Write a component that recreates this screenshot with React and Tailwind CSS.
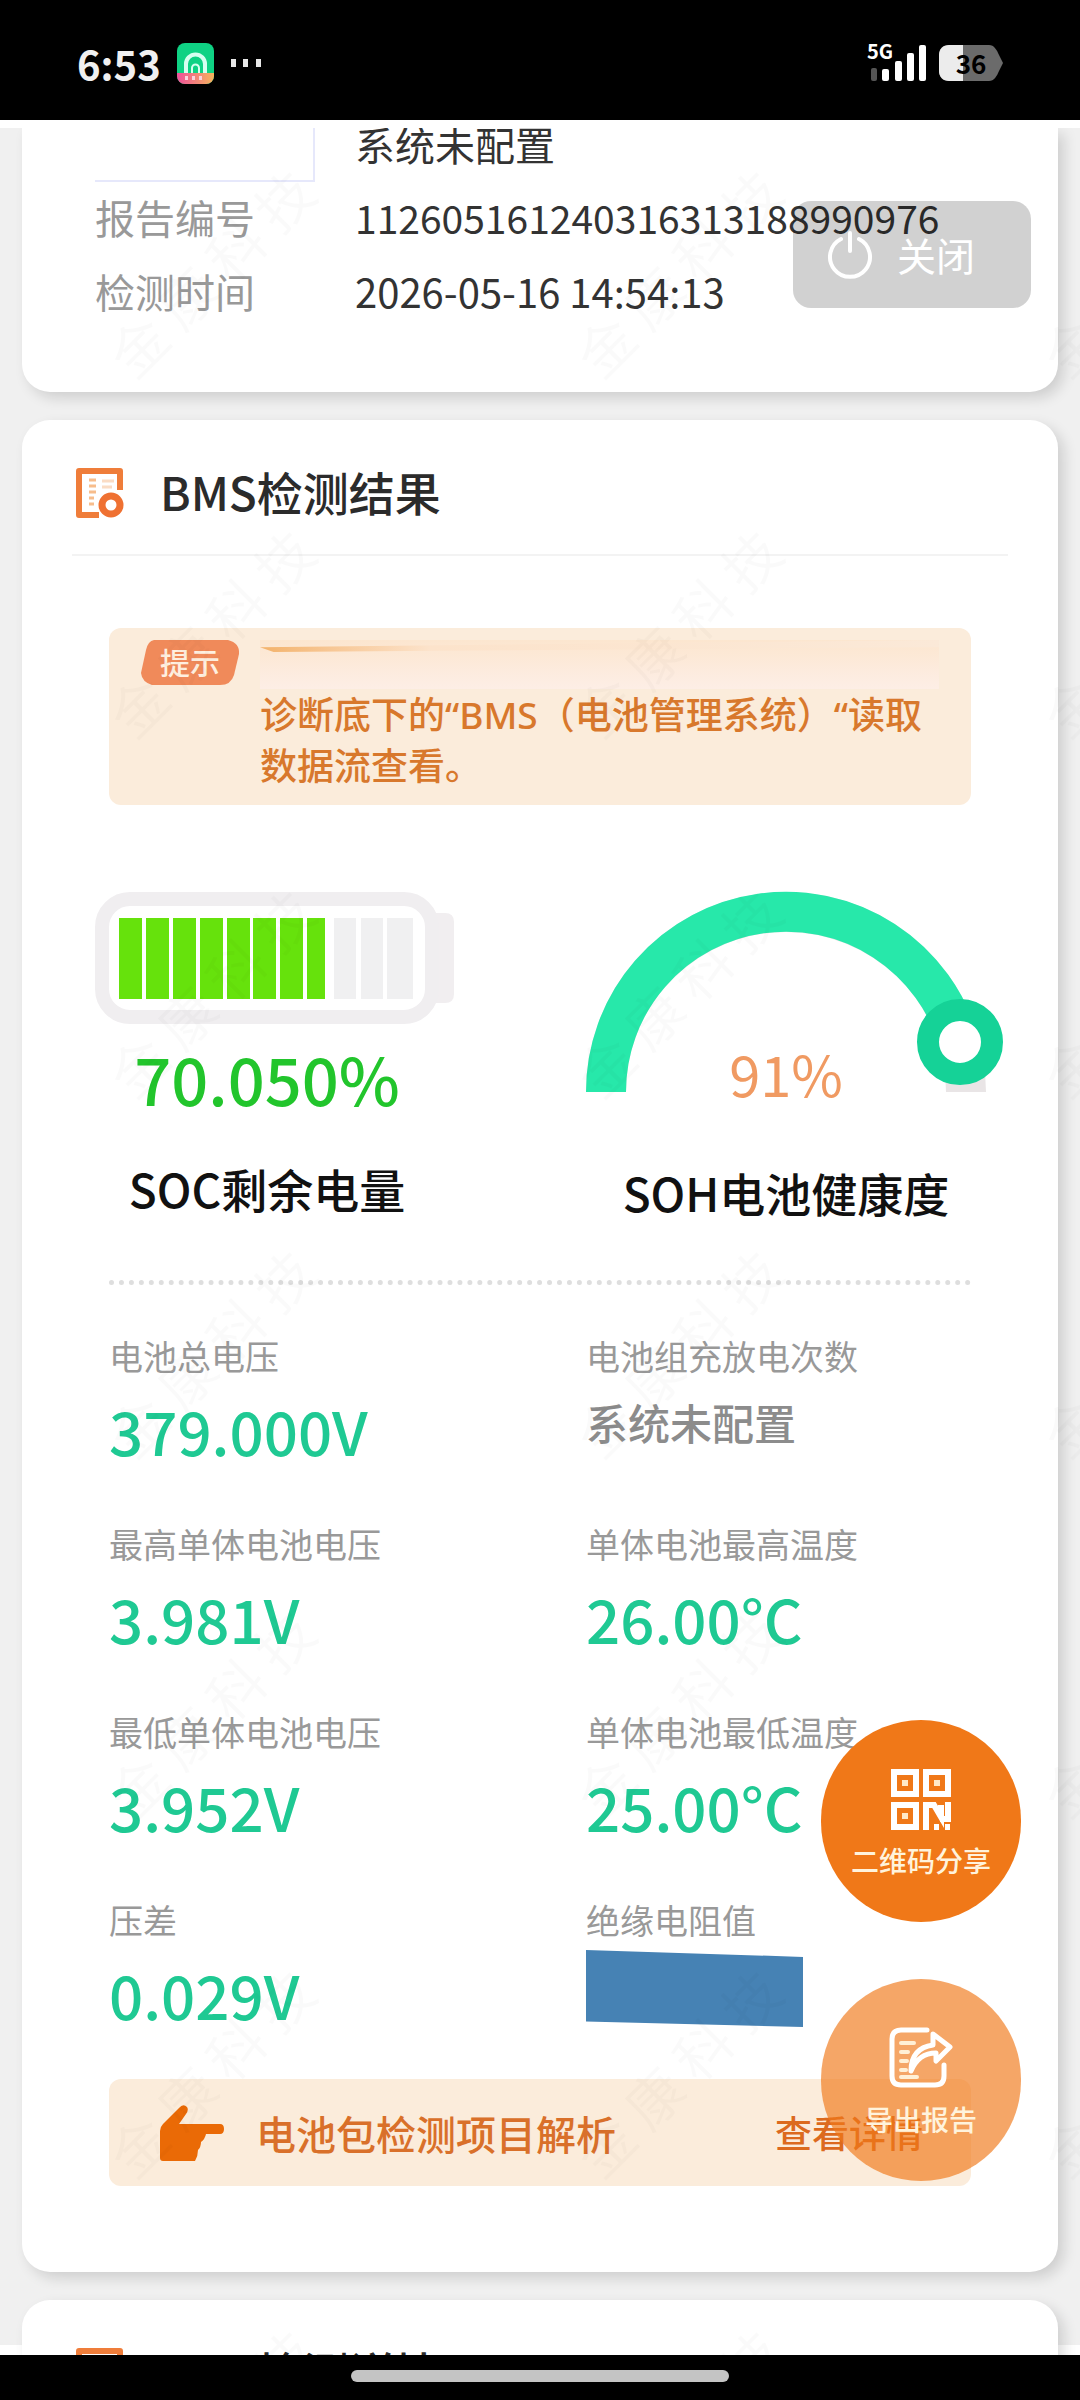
import React from "react";

const metrics = [
  { label: "电池总电压", value: "379.000V" },
  { label: "电池组充放电次数", value: null },
  { label: "最高单体电池电压", value: "3.981V" },
  { label: "单体电池最高温度", value: "26.00°C" },
  { label: "最低单体电池电压", value: "3.952V" },
  { label: "单体电池最低温度", value: "25.00°C" },
  { label: "压差", value: "0.029V" },
  { label: "绝缘电阻值", masked: true },
];

// widths of the battery cells, the eighth one is only partly filled
const cells = [
  { x: 24, w: 23, on: true },
  { x: 51, w: 23, on: true },
  { x: 78, w: 23, on: true },
  { x: 105, w: 23, on: true },
  { x: 132, w: 23, on: true },
  { x: 158, w: 23, on: true },
  { x: 185, w: 23, on: true },
  { x: 212, w: 18, on: true },
  { x: 239, w: 22, on: false },
  { x: 266, w: 22, on: false },
  { x: 292, w: 26, on: false },
];

function StatusBar() {
  return (
    <header className="flex h-[120px] shrink-0 items-center justify-between bg-black pl-[77px] pr-[77px] pt-1.5 text-white">
      <div className="flex items-center">
        <span className="text-[40px] font-bold leading-[48px] text-[#f0f0f0]">6:53</span>
        <svg className="ml-4 h-[41px] w-[37px]" viewBox="0 0 37 41">
          <defs>
            <linearGradient id="appStrip" x1="0" x2="1">
              <stop offset="0" stopColor="#f0509a" />
              <stop offset="1" stopColor="#f5b45c" />
            </linearGradient>
            <clipPath id="appClip">
              <rect width="37" height="41" rx="8" />
            </clipPath>
          </defs>
          <g clipPath="url(#appClip)">
            <rect width="37" height="41" fill="#0fd284" />
            <path d="M9 31V21a9.500 9.500 0 0 1 19 0v10" fill="none" stroke="#d6fff0" strokeWidth="4" />
            <path d="M15 31v-6a3.500 3.500 0 0 1 7 0v6" fill="none" stroke="#d6fff0" strokeWidth="2" />
            <rect y="30" width="37" height="11" fill="url(#appStrip)" />
            <path d="M8 33h3v4H8zM15 33h3v4h-3zM22 33h3v4h-3z" fill="#fbd3df" />
          </g>
        </svg>
        <svg className="ml-4 h-2 w-8" viewBox="0 0 32 8" fill="#e8e8e8">
          <rect x="1" y="0" width="5" height="8" />
          <rect x="13" y="0" width="5" height="8" />
          <rect x="26" y="0" width="5" height="8" />
        </svg>
      </div>
      <div className="flex items-center gap-3">
        <div className="relative h-11 w-[60px]">
          <span className="absolute left-0 top-0 text-[20px] font-bold leading-5">5G</span>
          <svg className="h-11 w-[60px]" viewBox="0 0 60 44" fill="#fff">
            <rect x="4" y="27" width="6" height="13" rx="2" fill="#555" />
            <rect x="15" y="28" width="7" height="12" rx="2" />
            <rect x="28" y="20" width="7" height="20" rx="2" />
            <rect x="40" y="12" width="7" height="28" rx="2" />
            <rect x="52" y="4" width="7" height="36" rx="2" />
          </svg>
        </div>
        <div className="relative h-9 w-16">
          <svg className="h-9 w-16" viewBox="0 0 64 36">
            <path d="M10 0h40c5 0 8 5 10 10l4 8-4 8c-2 5-5 10-10 10H10C4 36 0 32 0 26V10C0 4 4 0 10 0z" fill="#6b6b6b" />
            <path d="M24 0H10C4 0 0 4 0 10v16c0 6 4 10 10 10h14z" fill="#ececec" />
          </svg>
          <span className="absolute inset-0 text-center text-[26px] font-bold leading-9 text-black">36</span>
        </div>
      </div>
    </header>
  );
}

function Watermark() {
  return (
    <div
      aria-hidden="true"
      className="pointer-events-none absolute -left-6 -top-9 z-10 grid select-none auto-rows-[360px] grid-cols-[repeat(3,467px)] text-[56px] leading-none text-black/2"
    >
      {Array.from({ length: 21 }, (_, i) => (
        <div key={i} className="flex items-center justify-center">
          <span className="-rotate-45 whitespace-nowrap">金 康 科 技</span>
        </div>
      ))}
    </div>
  );
}

function ReportIcon() {
  return (
    <svg className="h-[50px] w-12" viewBox="0 0 48 50" fill="none">
      <path d="M44 22V3H3v44h20" stroke="#ef7d3a" strokeWidth="6" strokeLinejoin="round" />
      <path d="M13 12h7M13 18h7M13 24h7M13 30h5M13 36h5" stroke="#f7bd8c" strokeWidth="3" />
      <path d="M26 13h12M26 19h10" stroke="#fadcc4" strokeWidth="3" />
      <circle cx="35" cy="37" r="9" stroke="#ef7132" strokeWidth="7" />
    </svg>
  );
}

function SectionHeader({ title }) {
  return (
    <div className="mx-[50px] flex items-center gap-9 border-b-2 border-[#f3f3f3] pb-[30px] pl-1 pt-[42px]">
      <ReportIcon />
      <h2 className="pb-1 text-[46px] font-medium leading-[58px] text-[#2b2b2b]">{title}</h2>
    </div>
  );
}

function Battery() {
  return (
    <svg className="h-[132px] w-[360px]" viewBox="0 0 360 132">
      <path d="M336 21h14q9 0 9 9v72q0 9-9 9h-14z" fill="#f1eef0" />
      <rect x="7" y="7" width="330" height="118" rx="28" fill="#fff" stroke="#f0eef0" strokeWidth="14" />
      {cells.map((c) => (
        <rect key={c.x} x={c.x} y="26" width={c.w} height="81" fill={c.on ? "#66e20c" : "#f0f0f1"} />
      ))}
    </svg>
  );
}

function Gauge() {
  return (
    <div className="relative w-[400px]">
      <svg className="h-[200px] w-[400px] overflow-visible" viewBox="0 0 400 200" fill="none">
        <path d="M20 200A180 180 0 0 1 380 200" stroke="#e9e5e6" strokeWidth="40" />
        <path d="M20 200A180 180 0 0 1 373 150" stroke="#27e8aa" strokeWidth="40" />
        <circle cx="374" cy="150" r="32" fill="#fff" stroke="#15d297" strokeWidth="22" />
      </svg>
      <span className="absolute inset-x-0 bottom-0 text-center text-[56px] leading-[38px] text-[#f09a62]">91%</span>
    </div>
  );
}

function Metric({ label, value, masked }) {
  return (
    <div>
      <dt className="text-[34px] leading-[46px] text-[#999]">{label}</dt>
      {masked && (
        <dd className="mt-[7px] h-[77px] w-[217px] bg-[#4682b4] [clip-path:polygon(0_0,100%_9%,100%_100%,0_93%)]" />
      )}
      {!masked && value && (
        <dd className="mt-4 text-[60px] font-medium leading-[70px] text-[#1fc993]">{value}</dd>
      )}
      {!masked && !value && (
        <dd className="mt-4 text-[42px] font-medium leading-[54px] text-[#8c8c8c]">系统未配置</dd>
      )}
    </div>
  );
}

function HandIcon() {
  return (
    <svg className="h-14 w-16" viewBox="0 0 64 56" fill="#ea6a06">
      <path d="M3 56q-3 0-3-3V26q0-4 3-7L19 3q4-5 8-1 2 3-1 7l-7 10h41q4 0 4 5t-4 5H46q-1 5-5 8 0 5-3 8 0 6-3 11z" />
    </svg>
  );
}

function QrIcon() {
  return (
    <svg className="h-[62px] w-[62px]" viewBox="0 0 62 62" fill="none" stroke="#fff" strokeWidth="6">
      <rect x="4" y="4" width="22" height="22" />
      <rect x="36" y="4" width="22" height="22" />
      <rect x="4" y="37" width="22" height="22" />
      <g fill="#ffe9c8" stroke="none">
        <rect x="12" y="12" width="6" height="6" />
        <rect x="44" y="12" width="6" height="6" />
        <rect x="12" y="45" width="6" height="6" />
      </g>
      <path d="M36 62V37h8l7 12V37M58 34v17h-8" />
      <path d="M44 59h5M55 59h5" strokeWidth="6" />
    </svg>
  );
}

function ExportIcon() {
  return (
    <svg className="h-[62px] w-16" viewBox="0 0 64 62" fill="none" stroke="#fff" strokeWidth="5" strokeLinecap="round" strokeLinejoin="round">
      <path d="M38 3H12q-9 0-9 9v37q0 9 9 9h34q9 0 9-9V38" />
      <path d="M22 44c0-16 8-24 22-26V7l17 13-14 14v-8c-12 0-20 6-25 18z" />
      <path d="M12 16h13M12 25h7M12 34h6M12 43h5M12 50h16" stroke="#fff0d6" strokeWidth="4" />
    </svg>
  );
}

export default function App() {
  return (
    <div className="flex h-screen flex-col overflow-hidden bg-black font-['Noto_Sans_CJK_SC',sans-serif]">
      <StatusBar />

      <main className="relative min-h-0 flex-1 overflow-hidden border-t-8 border-white bg-[linear-gradient(to_top,#fff_10px,#f0f0f0_10px)] px-[22px]">
        <section className="rounded-b-[28px] bg-white px-[73px] pb-[64px] text-[40px] text-[#333] shadow-[6px_6px_14px_rgba(0,0,0,0.14)]">
          <div className="flex h-8 items-center">
            <span className="mr-10 h-[54px] w-[220px] shrink-0 self-start border-b-2 border-r-2 border-[#e6e8fb] bg-white" />
            <span className="leading-8">系统未配置</span>
          </div>
          <dl className="grid grid-cols-[220px_1fr] gap-x-10 pt-5 leading-[74px]">
            <dt className="text-[#999]">报告编号</dt>
            <dd className="text-[39px]">112605161240316313188990976</dd>
            <dt className="text-[#999]">检测时间</dt>
            <dd>2026-05-16 14:54:13</dd>
          </dl>
        </section>

        <section className="mt-7 rounded-[28px] bg-white pb-[86px] shadow-[6px_6px_14px_rgba(0,0,0,0.14)]">
          <SectionHeader title="BMS检测结果" />

          <div className="mx-[87px] mt-[72px] flex gap-5 rounded-xl bg-[#fbecdb] pb-3.5 pl-[31px] pr-8 pt-3">
            <div className="relative h-[45px] w-[100px] shrink-0">
              <svg className="h-[45px] w-[100px]" viewBox="0 0 100 45">
                <path d="M14 0h74q12 3 11 14l-5 21q-3 10-14 10H12Q2 42 1 33L6 10Q8 1 14 0z" fill="#f08a5a" />
              </svg>
              <span className="absolute inset-0 text-center text-[30px] font-medium leading-[42px] text-[#fff0e0]">提示</span>
            </div>
            <div className="min-w-0 flex-1">
              <div className="h-[49px] bg-linear-to-b from-[#fce6cf] to-[#fdeee6]">
                <div className="h-3 w-full bg-linear-to-r from-[#f3b26a] via-[#fce3cb] via-25% to-[#fbe9d8] [clip-path:polygon(0_60%,100%_0,100%_60%,2%_100%)]" />
              </div>
              <p className="whitespace-nowrap font-['Noto_Sans','Noto_Sans_CJK_SC',sans-serif] text-[37px] font-medium leading-[51px] text-[#d8782c]">
                诊断底下的“BMS（电池管理系统）“读取
                <br />
                数据流查看。
              </p>
            </div>
          </div>

          <div className="mx-[87px] mt-[87px] grid grid-cols-2 gap-x-[92px] border-b-5 border-dotted border-[#dedede] pb-[58px]">
            <div className="-ml-3.5 flex w-[344px] flex-col items-center">
              <div className="w-[344px]">
                <Battery />
              </div>
              <p className="mt-[18px] text-[65px] font-medium leading-[72px] text-[#22c52c]">70.050%</p>
              <h3 className="mt-11 text-[46px] font-medium leading-[60px] text-[#111]">SOC剩余电量</h3>
            </div>
            <div className="flex w-[400px] flex-col items-center">
              <Gauge />
              <h3 className="mt-[70px] text-[46px] font-medium leading-[60px] text-[#111]">SOH电池健康度</h3>
            </div>
          </div>

          <dl className="mx-[87px] mt-12 grid grid-cols-2 gap-x-[92px] gap-y-14">
            {metrics.map((m) => (
              <Metric key={m.label} {...m} />
            ))}
          </dl>

          <a
            href="#detail"
            className="mx-[87px] mt-[50px] flex h-[107px] items-center rounded-xl bg-[#fbecdb] pl-[51px] pr-12 font-medium text-[#d9702a]"
          >
            <HandIcon />
            <span className="ml-8 text-[40px]">电池包检测项目解析</span>
            <span className="ml-auto text-[37px] text-[#dc6a1e]">查看详情</span>
          </a>
        </section>

        <section className="mt-7 rounded-t-[28px] bg-white shadow-[6px_6px_14px_rgba(0,0,0,0.14)]">
          <SectionHeader title="BMS检测详情" />
        </section>

        <Watermark />

        <button
          type="button"
          className="absolute right-[49px] top-[73px] z-20 flex h-[107px] w-[238px] items-center rounded-[18px] bg-black/18 pl-[34px] text-[39px] text-white"
        >
          <svg className="mr-6 h-12 w-[46px]" viewBox="0 0 46 48" fill="none" stroke="#fff" strokeWidth="4" strokeLinecap="round">
            <path d="M14 8a20 20 0 1 0 18 0M23 2v18" />
          </svg>
          关闭
        </button>

        <div className="absolute bottom-[174px] right-[59px] z-20 flex flex-col gap-[57px] text-[28px] font-medium leading-9 text-[#fff3dc]">
          <button
            type="button"
            className="flex h-[202px] w-[200px] flex-col items-center rounded-full bg-[#f07818] pt-12"
          >
            <QrIcon />
            <span className="mt-3">二维码分享</span>
          </button>
          <button
            type="button"
            className="flex h-[202px] w-[200px] flex-col items-center rounded-full bg-[#f07818]/66 pt-12"
          >
            <ExportIcon />
            <span className="mt-3">导出报告</span>
          </button>
        </div>
      </main>

      <footer className="flex h-[45px] shrink-0 justify-center bg-black pt-[15px]">
        <div className="h-3 w-[35%] rounded-md bg-[#c4c4c4]" />
      </footer>
    </div>
  );
}
